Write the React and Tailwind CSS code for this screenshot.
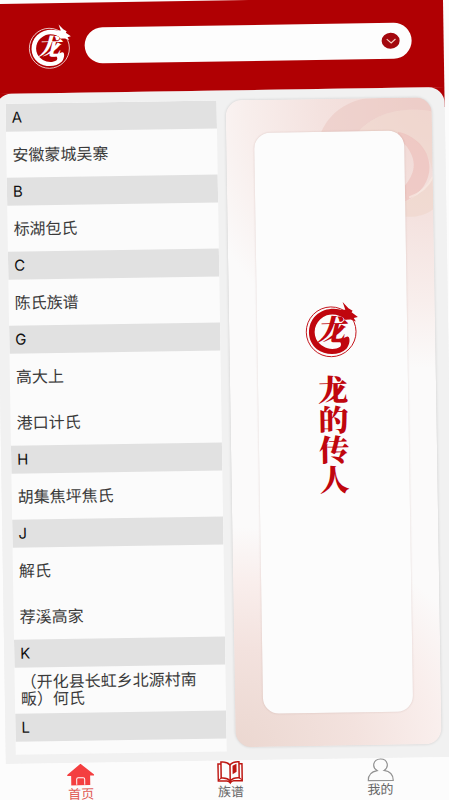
const groups = [
  { letter: 'A', names: ['安徽蒙城吴寨'] },
  { letter: 'B', names: ['标湖包氏'] },
  { letter: 'C', names: ['陈氏族谱'] },
  { letter: 'G', names: ['高大上', '港口计氏'] },
  { letter: 'H', names: ['胡集焦坪焦氏'] },
  { letter: 'J', names: ['解氏', '荐溪高家'] },
  { letter: 'K', names: ['（开化县长虹乡北源村南畈）何氏'] },
  { letter: 'L', names: [''] },
];

function DragonLogo({ className }) {
  return (
    <svg viewBox="0 -8 104 108" className={className} fill="currentColor" aria-hidden="true">
      <circle cx="50" cy="50" r="48" fill="none" stroke="currentColor" strokeWidth="1.8" />
      <path d="M78 11C62 3 38 3 21 18C2 36 3 67 22 83C38 96 66 96 79 83C84 77 87 67 84 61C80 57 75 63 68 67C64 70 72 72 67 79C52 88 30 81 21 64C13 45 23 25 42 18C55 14 68 18 80 27Z" />
      <path d="M68 8L78 8L73-7L84 5L92 10L90 13L102 22L94 24L98 31L88 27L76 27Z" />
      <text
        x="49"
        y="67"
        textAnchor="middle"
        className="font-['Noto_Serif_CJK_SC','Noto_Sans_CJK_SC',serif] text-[56px] font-black italic"
      >
        龙
      </text>
    </svg>
  );
}

function Header() {
  return (
    <header className="flex h-[90px] shrink-0 items-start bg-[#b00003] pl-[33px] pr-8 pt-[21px] text-white">
      <DragonLogo className="h-[45px] w-[45px] shrink-0" />
      <div className="ml-3 mt-1 flex h-9 flex-1 items-center rounded-full bg-[#fdfdfd] pr-3">
        <input
          type="text"
          aria-label="搜索"
          className="h-full min-w-0 flex-1 rounded-full bg-transparent px-4 text-sm text-gray-800 outline-none"
        />
        <button
          type="button"
          aria-label="展开"
          className="flex h-4 w-[18px] items-center justify-center rounded-[50%] bg-[#a3080e]"
        >
          <svg viewBox="0 0 12 8" className="h-[7px] w-[11px]" fill="none" stroke="#f6cfc4" strokeWidth="1.3">
            <path d="M1 1.5L6 6L11 1.5" />
          </svg>
        </button>
      </div>
    </header>
  );
}

function FamilyList() {
  return (
    <section className="overflow-hidden bg-[#fbfbfb]">
      {groups.map((group) => (
        <div key={group.letter}>
          <h2 className="flex h-7 items-center bg-[#e1e1e1] px-[6px] font-[Inter,sans-serif] text-[15px] text-[#111]">
            {group.letter}
          </h2>
          <ul>
            {group.names.map((name) => (
              <li
                key={name}
                className="flex h-[46px] items-center pb-[2px] pl-[6px] pr-6 text-base leading-[17px] text-[#3a3a3a]"
              >
                {name}
              </li>
            ))}
          </ul>
        </div>
      ))}
    </section>
  );
}

function CoverCard() {
  return (
    <section className="relative mb-1 flex overflow-hidden rounded-2xl bg-[#fbfafa] bg-[radial-gradient(ellipse_120%_42%_at_100%_0%,#f0d6d2_0%,#f4e2df_45%,#f8eeec_75%,transparent_100%),radial-gradient(ellipse_130%_34%_at_0%_100%,#ebd7d0_0%,#f3e2de_45%,#f9eeec_75%,transparent_100%)] px-7 py-[33px] shadow-[0_0_3px_rgba(0,0,0,0.14)]">
      <svg viewBox="0 0 206 200" className="absolute right-0 top-0 w-full" fill="none" aria-hidden="true">
        <path d="M94 36C102 16 118 4 140 0H206V14C170 8 145 18 130 36Z" fill="#e8c0ba" opacity="0.45" />
        <path d="M130 36C145 18 170 8 206 14V74C202 54 190 40 176 36Z" fill="#eed5ca" opacity="0.55" />
        <path d="M172 34C210 44 214 88 178 104V88C192 72 190 56 172 40Z" fill="#edbdb8" opacity="0.6" />
        <path d="M178 104C188 100 198 92 206 80V112C198 118 188 120 178 119Z" fill="#efd6ca" opacity="0.6" />
        <path d="M182 100C194 96 202 88 206 80" stroke="#f8e9e3" strokeWidth="2" opacity="0.7" />
      </svg>
      <div className="relative flex flex-1 flex-col items-center rounded-2xl bg-[#fcfcfc] pt-[170px] text-[#c0060e] shadow-[0_0_2px_rgba(120,60,50,0.22)]">
        <DragonLogo className="h-[56px] w-[54px]" />
        <h1 className="mt-[17px] font-['Noto_Serif_CJK_SC','Noto_Sans_CJK_SC',serif] text-[30px] font-black leading-[30px] [writing-mode:vertical-rl]">
          龙的传人
        </h1>
      </div>
    </section>
  );
}

function HomeIcon() {
  return (
    <svg viewBox="0 0 27 22" className="h-[22px] w-[27px]" aria-hidden="true">
      <path d="M13.5 0L27 11V12H23V21.5H4V12H0V11Z" fill="#f43f40" />
      <path d="M9.5 21V15.5Q9.500 14 11 14H16Q17.500 14 17.500 15.500V21" fill="none" stroke="#fff" strokeWidth="1" />
    </svg>
  );
}

function BookIcon() {
  return (
    <svg viewBox="0 0 26 24" className="h-6 w-[26px]" fill="none" stroke="#be1712" strokeWidth="1.5" aria-hidden="true">
      <path d="M4 1.500Q10 1 13 4.500Q16 1 22 1.500V17.500Q16 17 13 20.500Q10 17 4 17.500Z" />
      <path d="M4 3.500H1V20.500H9.500Q12 20.500 13 22.500Q14 20.500 16.500 20.500H25V3.500H22M13 4.500V21" />
      <path d="M1.500 19.500L4 17.500M24.500 19.500L22 17.500" strokeWidth="1" />
      <path d="M15.500 5.500L19.500 3.500V11.500L15.500 14Z" fill="#be1712" stroke="none" />
    </svg>
  );
}

function UserIcon() {
  return (
    <svg viewBox="0 0 27 24" className="h-6 w-[27px]" fill="none" stroke="#929292" strokeWidth="1.200" aria-hidden="true">
      <path d="M10 12.500C7 10.500 6.500 7.500 6.800 6C7.500 2.500 10.500 1 13.500 1C16.500 1 19.500 2.500 20.200 6C20.500 7.500 20 10.500 17 12.500C23 13.500 26 17 26 22.500H1C1 17 4 13.500 10 12.500Z" />
    </svg>
  );
}

function TabBar() {
  const tabs = [
    { label: '首页', icon: <HomeIcon />, color: 'text-[#e05a55]' },
    { label: '族谱', icon: <BookIcon />, color: 'text-[#666]' },
    { label: '我的', icon: <UserIcon />, color: 'text-[#666]' },
  ];
  return (
    <nav className="grid h-10 shrink-0 grid-cols-3 bg-[#fcfcfc]">
      {tabs.map((tab) => (
        <button
          key={tab.label}
          type="button"
          className={'flex flex-col items-center text-[13px] leading-[13px] ' + tab.color}
        >
          <span className="flex h-6 items-center">{tab.icon}</span>
          {tab.label}
        </button>
      ))}
    </nav>
  );
}

export default function App() {
  return (
    <div className="h-screen overflow-hidden bg-[#fcfcfc] font-['Noto_Sans_CJK_SC',sans-serif]">
      <div className="flex h-full w-full origin-top-left -translate-x-[6px] translate-y-1 -rotate-[0.9deg] flex-col">
        <Header />
        <div className="flex min-h-0 flex-1 flex-col bg-[linear-gradient(#b00003_20px,#f1f1f1_20px)]">
          <main className="grid min-h-0 flex-1 grid-cols-[211fr_206fr] grid-rows-[minmax(0,1fr)] gap-[9px] rounded-t-2xl bg-[#f1f1f1] pb-[9px] pl-[10px] pr-[13px] pt-[10px]">
            <FamilyList />
            <CoverCard />
          </main>
        </div>
        <TabBar />
      </div>
    </div>
  );
}
